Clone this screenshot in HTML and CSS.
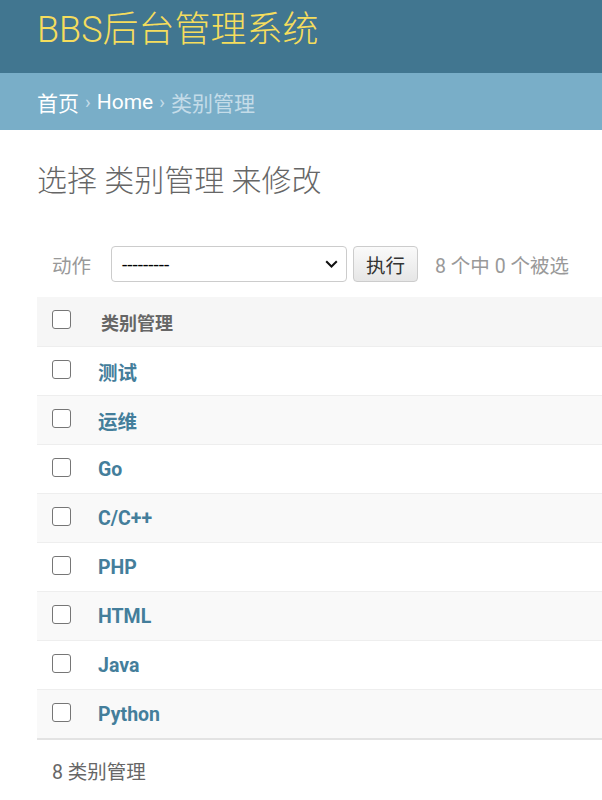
FILE: index.html
```html
<!DOCTYPE html>
<html lang="zh">
<head>
<meta charset="utf-8">
<title>选择 类别管理 来修改</title>
<link rel="stylesheet" href="styles.css">
</head>
<body>
<div class="header"><h1 class="brand">BBS后台管理系统</h1></div>
<div class="breadcrumbs"><a href="#">首页</a><span class="sep">›</span><a href="#">Home</a><span class="sep">›</span><span>类别管理</span></div>
<div class="content">
  <h1 class="title">选择 类别管理 来修改</h1>
  <div class="actions">
    <span class="label">动作</span>
    <div class="select"><span>---------</span><svg width="13" height="8" viewBox="0 0 13 8"><path d="M1.2 1.2 L6.5 6.5 L11.8 1.2" fill="none" stroke="#111" stroke-width="2"/></svg></div>
    <button class="go" type="button">执行</button>
    <span class="counter">8 个中 0 个被选</span>
  </div>
  <table class="results">
    <thead>
      <tr><th class="check"><input type="checkbox" class="cb"></th><th class="name">类别管理</th></tr>
    </thead>
    <tbody>
      <tr><td class="check"><input type="checkbox" class="cb"></td><td class="name"><a href="#">测试</a></td></tr>
      <tr><td class="check"><input type="checkbox" class="cb"></td><td class="name"><a href="#">运维</a></td></tr>
      <tr><td class="check"><input type="checkbox" class="cb"></td><td class="name"><a href="#">Go</a></td></tr>
      <tr><td class="check"><input type="checkbox" class="cb"></td><td class="name"><a href="#">C/C++</a></td></tr>
      <tr><td class="check"><input type="checkbox" class="cb"></td><td class="name"><a href="#">PHP</a></td></tr>
      <tr><td class="check"><input type="checkbox" class="cb"></td><td class="name"><a href="#">HTML</a></td></tr>
      <tr><td class="check"><input type="checkbox" class="cb"></td><td class="name"><a href="#">Java</a></td></tr>
      <tr><td class="check"><input type="checkbox" class="cb"></td><td class="name"><a href="#">Python</a></td></tr>
    </tbody>
  </table>
  <p class="paginator">8 类别管理</p>
</div>
</body>
</html>
```
FILE: styles.css
```css
html, body {
  margin: 0;
  padding: 0;
  background: #fff;
}
body {
  font-family: Roboto, "Noto Sans CJK SC", "Noto Sans", sans-serif;
  color: #333;
  overflow: hidden;
}
.header {
  background: #417690;
  height: 73px;
  box-sizing: border-box;
  padding: 8px 37px 0 37px;
}
.brand {
  margin: 0;
  font-size: 36px;
  line-height: 44px;
  font-weight: 300;
  color: #f5dd5d;
}
.breadcrumbs {
  background: #79aec8;
  height: 57px;
  box-sizing: border-box;
  padding: 0 37px;
  display: flex;
  align-items: center;
  font-size: 21px;
  color: #c4dce8;
}
.breadcrumbs a {
  color: #fff;
  text-decoration: none;
}
.breadcrumbs .sep {
  margin: 0 6px;
  font-size: 19px;
}
.content {
  padding: 33px 0 0 37px;
}
.title {
  margin: 0 0 47px 0;
  font-size: 30px;
  line-height: 36px;
  font-weight: 300;
  color: #666;
}
.actions {
  display: flex;
  align-items: center;
  height: 36px;
  padding-left: 15px;
  margin-bottom: 15px;
  font-size: 19.5px;
  color: #999;
}
.label {
  width: 59px;
  flex: none;
}
.select {
  width: 236px;
  height: 36px;
  box-sizing: border-box;
  border: 1px solid #ccc;
  border-radius: 4px;
  background: #fff;
  display: flex;
  align-items: center;
  justify-content: space-between;
  padding: 0 8px 0 10px;
  color: #000;
  font-size: 19px;
  flex: none;
}
.go {
  margin: 0 0 0 6px;
  width: 65px;
  height: 36px;
  box-sizing: border-box;
  border: 1px solid #ccc;
  border-radius: 4px;
  background: linear-gradient(#fafafa, #e6e6e6);
  font-family: Roboto, "Noto Sans CJK SC", sans-serif;
  font-size: 19.5px;
  color: #333;
  padding: 0;
  flex: none;
}
.counter {
  margin-left: 17px;
  white-space: nowrap;
}
.results {
  width: 100%;
  border-collapse: collapse;
}
.results th, .results td {
  padding: 0;
  height: 48px;
  border-bottom: 1px solid #eee;
  text-align: left;
  vertical-align: middle;
}
.results thead th {
  background: #f6f6f6;
  height: 49px;
}
.results th.name {
  padding-left: 30px;
  font-size: 18px;
  font-weight: 700;
  color: #666;
}
.results td.name {
  padding-left: 27px;
  font-size: 19.5px;
  font-weight: 700;
}
.results td.name a {
  color: #447e9b;
  text-decoration: none;
}
.results .check {
  padding-left: 15px;
  width: 19px;
}
.results tbody tr:nth-child(even) td {
  background: #f9f9f9;
}
.results tbody tr:last-child td {
  border-bottom: 2px solid #e3e3e3;
}
.cb {
  appearance: none;
  -webkit-appearance: none;
  display: block;
  margin: 0;
  width: 19px;
  height: 19px;
  box-sizing: border-box;
  border: 1px solid #767676;
  border-radius: 3px;
  background: #fff;
  position: relative;
  top: -2px;
}
.paginator {
  margin: 0;
  padding: 16px 0 0 15px;
  font-size: 19.5px;
  line-height: 33px;
  color: #666;
}
```
